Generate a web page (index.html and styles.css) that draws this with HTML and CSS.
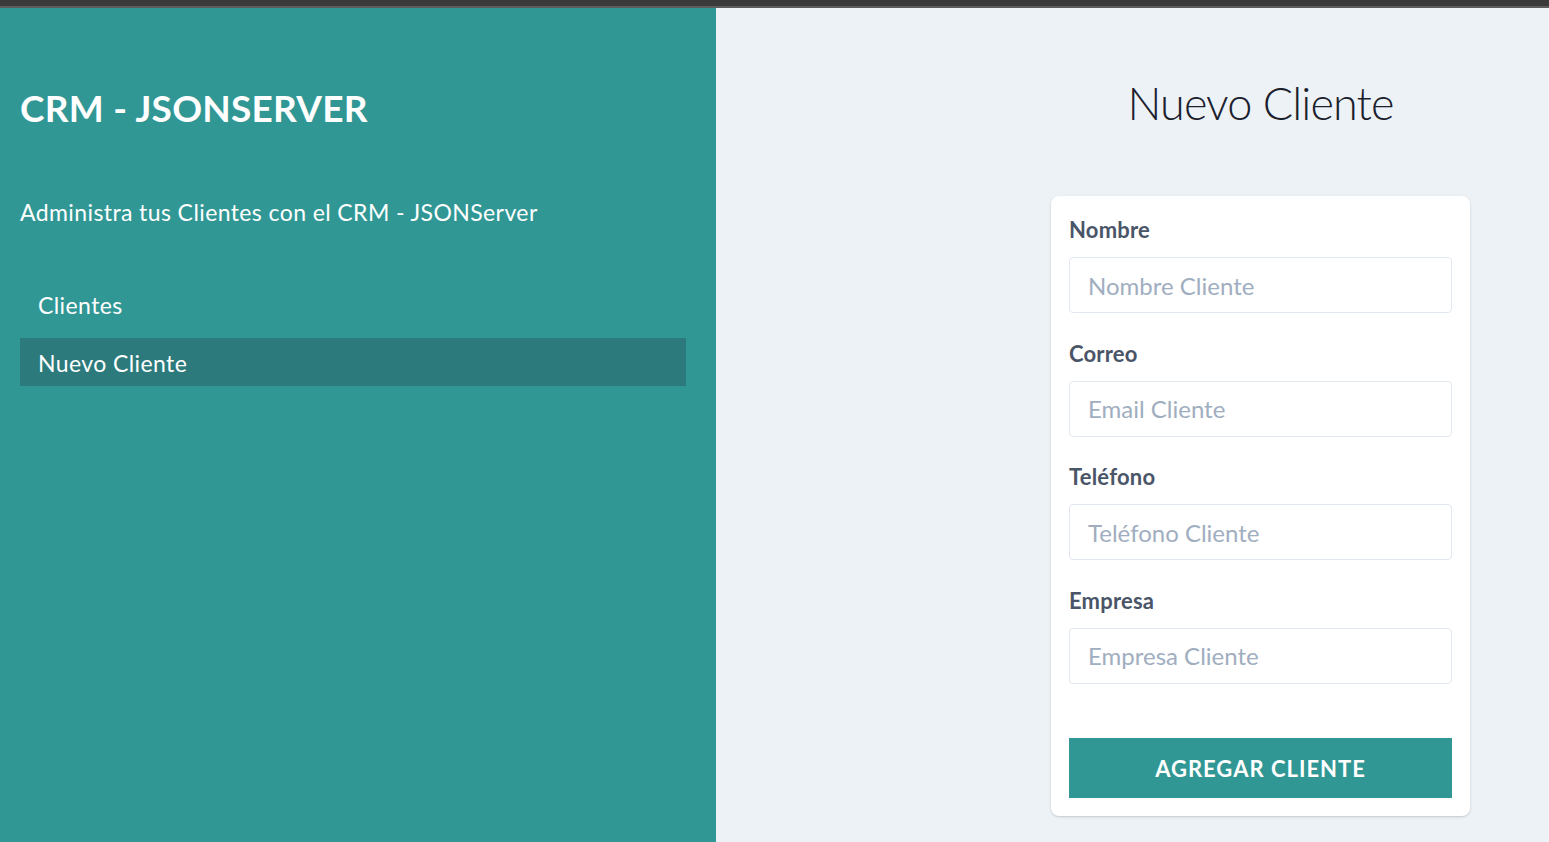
FILE: index.html
```html
<!DOCTYPE html>
<html lang="es">
<head>
<meta charset="utf-8">
<title>CRM - JSONSERVER</title>
<link rel="stylesheet" href="styles.css">
</head>
<body>
<div class="topbar"></div>
<div class="layout">
  <aside class="sidebar">
    <h1 class="brand">CRM - JSONSERVER</h1>
    <p class="tagline">Administra tus Clientes con el CRM - JSONServer</p>
    <nav class="nav">
      <a class="nav-item" href="#">Clientes</a>
      <a class="nav-item active" href="#">Nuevo Cliente</a>
    </nav>
  </aside>
  <main class="main">
    <div class="column">
      <h2 class="page-title">Nuevo Cliente</h2>
      <form class="card">
        <div class="field">
          <label class="label" for="nombre">Nombre</label>
          <input class="input" id="nombre" type="text" placeholder="Nombre Cliente">
        </div>
        <div class="field">
          <label class="label" for="email">Correo</label>
          <input class="input" id="email" type="email" placeholder="Email Cliente">
        </div>
        <div class="field">
          <label class="label" for="telefono">Teléfono</label>
          <input class="input" id="telefono" type="tel" placeholder="Teléfono Cliente">
        </div>
        <div class="field">
          <label class="label" for="empresa">Empresa</label>
          <input class="input" id="empresa" type="text" placeholder="Empresa Cliente">
        </div>
        <button class="submit" type="button">AGREGAR CLIENTE</button>
      </form>
    </div>
  </main>
</div>
</body>
</html>
```

FILE: styles.css
```css
* { box-sizing: border-box; }

html, body {
  margin: 0;
  padding: 0;
  height: 100%;
  overflow: hidden;
}

body {
  font-family: Lato, "Open Sans", "Noto Sans", sans-serif;
  background: #edf2f7;
}

.topbar {
  height: 8px;
  background: #3a3a3a;
  border-bottom: 2px solid #5c5c5c;
}

.layout {
  display: flex;
  height: 834px;
}

.sidebar {
  width: 716px;
  flex: 0 0 716px;
  background: #319795;
  padding: 78px 30px 0 20px;
  color: #ffffff;
}

.brand {
  margin: 0;
  font-size: 37px;
  font-weight: 700;
  line-height: 44px;
  letter-spacing: 0.25px;
}

.tagline {
  margin: 69px 0 0;
  font-size: 23px;
  line-height: 27px;
  font-weight: 400;
  letter-spacing: 0.4px;
}

.nav {
  margin-top: 54px;
  display: flex;
  flex-direction: column;
  gap: 10px;
}

.nav-item {
  display: flex;
  align-items: center;
  height: 48px;
  padding: 2px 18px 0;
  color: #ffffff;
  text-decoration: none;
  font-size: 23px;
  line-height: 27px;
  letter-spacing: 0.4px;
}

.nav-item.active {
  background: #2c7a7b;
}

.main {
  flex: 1;
  padding: 67.5px 0 0 335px;
}

.column {
  width: 419px;
  display: flex;
  flex-direction: column;
}

.page-title {
  margin: 0;
  text-align: center;
  font-size: 45px;
  font-weight: 300;
  line-height: 54px;
  letter-spacing: -0.9px;
  color: #1a202c;
}

.card {
  margin-top: 66.5px;
  background: #ffffff;
  border-radius: 8px;
  box-shadow: 0 1px 3px rgba(0, 0, 0, 0.12), 0 1px 2px rgba(0, 0, 0, 0.06);
  padding: 19px 18px 18px;
  display: flex;
  flex-direction: column;
}

.field {
  display: flex;
  flex-direction: column;
}

.field + .field {
  margin-top: 25.5px;
}

.label {
  font-size: 22px;
  font-weight: 700;
  line-height: 30px;
  letter-spacing: 0.2px;
  color: #4a5568;
  margin-bottom: 12px;
}

.input {
  height: 56px;
  border: 1px solid #e2e8f0;
  border-radius: 4px;
  padding: 0 18px;
  font-family: inherit;
  font-size: 24px;
  color: #4a5568;
  background: #ffffff;
  outline: none;
}

.input::placeholder {
  color: #a0aec0;
  opacity: 1;
}

.submit {
  margin-top: 54.5px;
  height: 60px;
  border: 0;
  background: #319795;
  color: #ffffff;
  font-family: inherit;
  font-size: 22px;
  font-weight: 700;
  letter-spacing: 1px;
  padding-top: 2px;
  cursor: pointer;
}
```
